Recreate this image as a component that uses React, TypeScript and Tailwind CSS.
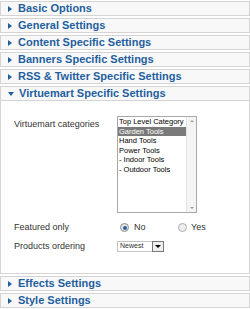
import React from 'react'

const font = { fontFamily: '"Liberation Sans", Arial, sans-serif' }

function Header({ title, open = false }: { title: string; open?: boolean }) {
  return (
    <div className="h-[15px] border border-[#d4d4d4] bg-[#f8f8f8] flex items-center pl-[7px]">
      {open ? (
        <span className="w-0 h-0 border-l-[3px] border-r-[3px] border-t-[4px] border-l-transparent border-r-transparent border-t-[#1f5f9f] mr-[5px]" />
      ) : (
        <span className="w-0 h-0 border-t-[3px] border-b-[3px] border-l-[4px] border-t-transparent border-b-transparent border-l-[#1f5f9f] mr-[6px]" />
      )}
      <span className="text-[11px] font-bold text-[#1f5f9f] leading-none">{title}</span>
    </div>
  )
}

const categories = ['Top Level Category', 'Garden Tools', 'Hand Tools', 'Power Tools', '- Indoor Tools', '- Outdoor Tools']

export default function App() {
  return (
    <div className="w-[250px] h-[309px] bg-white overflow-hidden pt-px flex flex-col gap-[2px]" style={font}>
      <Header title="Basic Options" />
      <Header title="General Settings" />
      <Header title="Content Specific Settings" />
      <Header title="Banners Specific Settings" />
      <Header title="RSS & Twitter Specific Settings" />
      <div>
        <Header title="Virtuemart Specific Settings" open />
        {/* panel body */}
        <div className="h-[173px] border border-t-0 border-[#d4d4d4] bg-white text-[9px] text-[#333]">
          <div className="flex pt-[15px] pl-[13px]">
            <div className="w-[103px] pt-[2px]">Virtuemart categories</div>
            <div className="w-[80px] h-[97px] border border-[#a8a8a8] flex bg-white">
              <div className="flex-1 min-w-0 text-[7.5px] leading-[9.5px] text-black whitespace-nowrap overflow-hidden">
                {categories.map((c, i) => (
                  <div key={c} className={i === 1 ? 'bg-[#7a7a7a] text-white pl-px' : 'pl-px'}>
                    {c}
                  </div>
                ))}
              </div>
              <div className="w-[10px] border-l border-[#e4e4e4] bg-[#f4f4f4] flex flex-col justify-between items-center py-[3px]">
                <span className="w-0 h-0 border-l-[2px] border-r-[2px] border-b-[2px] border-l-transparent border-r-transparent border-b-[#999]" />
                <span className="w-0 h-0 border-l-[2px] border-r-[2px] border-t-[2px] border-l-transparent border-r-transparent border-t-[#999]" />
              </div>
            </div>
          </div>
          <div className="flex items-center pl-[13px] mt-[8px]">
            <div className="w-[106px]">Featured only</div>
            <span className="w-[9px] h-[9px] rounded-full border border-[#8a8a8a] bg-[#e8e8e8] flex items-center justify-center">
              <span className="w-[4px] h-[4px] rounded-full bg-[#2a5d9a]" />
            </span>
            <span className="ml-[5px] w-[44px]">No</span>
            <span className="w-[9px] h-[9px] rounded-full border border-[#b0b0b0] bg-[#eee]" />
            <span className="ml-[4px]">Yes</span>
          </div>
          <div className="flex items-center pl-[13px] mt-[5px]">
            <div className="w-[103px]">Products ordering</div>
            <div className="w-[47px] h-[11px] border border-[#c4c4c4] flex items-center text-[7px] text-[#333]">
              <span className="flex-1 pl-[2px]">Newest</span>
              <span className="w-[12px] h-[11px] border border-[#777] bg-[#eee] flex items-center justify-center -mr-px">
                <span className="w-0 h-0 border-l-[3px] border-r-[3px] border-t-[3px] border-l-transparent border-r-transparent border-t-black" />
              </span>
            </div>
          </div>
        </div>
      </div>
      <Header title="Effects Settings" />
      <Header title="Style Settings" />
    </div>
  )
}
